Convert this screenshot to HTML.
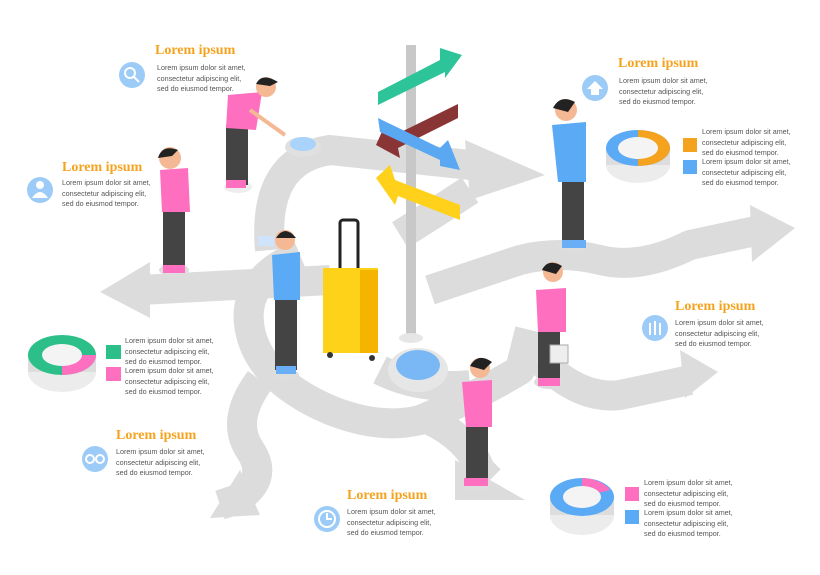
<!DOCTYPE html>
<html><head><meta charset="utf-8"><style>
body{margin:0;width:820px;height:575px;background:#fff;position:relative;overflow:hidden;font-family:"Liberation Sans",sans-serif}
.t{position:absolute;font-family:"Liberation Serif",serif;font-weight:bold;color:#f5a31f;font-size:14px;white-space:nowrap}
.p{position:absolute;font-size:7.2px;line-height:10.5px;color:#555;white-space:nowrap}
svg{position:absolute;left:0;top:0}
</style></head><body>
<svg width="820" height="575" viewBox="0 0 820 575">
<g fill="none" stroke="#dcdcdc" stroke-width="30" stroke-linejoin="round" stroke-linecap="butt">
<path d="M270 250 Q262 160 330 150 L470 165"/>
<path d="M400 235 Q440 210 470 190"/>
<path d="M330 280 L140 290"/>
<path d="M300 255 Q240 280 250 330 Q260 380 330 410 Q380 430 420 420 Q470 400 520 370 L530 330"/>
<path d="M430 290 L520 260 Q560 250 600 260 Q640 270 690 245 L760 230"/>
<path d="M540 360 Q580 400 620 395 L690 380"/>
<path d="M260 380 Q230 420 250 450 Q270 480 235 500 L220 505"/>
<path d="M430 420 Q470 440 480 470 L490 480"/>
<path d="M380 370 Q420 390 470 385"/>
</g>
<g fill="#dcdcdc">
<polygon points="465,140 545,175 470,200"/>
<polygon points="150,262 100,292 150,318"/>
<polygon points="750,205 795,228 752,262"/>
<polygon points="680,350 718,372 685,398"/>
<polygon points="240,470 210,518 260,515"/>
<polygon points="455,460 525,500 455,500"/>
</g>
<!-- signpost -->
<rect x="406" y="45" width="10" height="290" fill="#c8c8c8"/>
<ellipse cx="411" cy="338" rx="12" ry="5" fill="#e6e6e6"/>
<polygon points="378,92 440,60 440,48 462,55 445,78 445,72 378,105" fill="#2dc49a"/>
<polygon points="395,135 458,104 458,118 398,148 400,158 376,145 385,125" fill="#8a3535"/>
<polygon points="378,118 440,148 448,140 460,170 440,166 440,160 380,132" fill="#5aa8f2"/>
<polygon points="395,180 460,205 460,220 398,196 395,205 376,178 390,165" fill="#ffd11a"/>
<!-- suitcase -->
<rect x="340" y="220" width="18" height="60" fill="none" stroke="#222" stroke-width="3" rx="3"/>
<rect x="323" y="268" width="55" height="85" fill="#ffd21a"/>
<rect x="360" y="270" width="18" height="83" fill="#f5b400"/>
<circle cx="330" cy="355" r="3" fill="#333"/><circle cx="372" cy="358" r="3" fill="#333"/>
<!-- magnifier bowls -->
<ellipse cx="418" cy="370" rx="30" ry="22" fill="#e6e6e6"/><ellipse cx="418" cy="365" rx="22" ry="15" fill="#7ab8f5"/>
<ellipse cx="303" cy="147" rx="18" ry="10" fill="#e0e0e0"/><ellipse cx="303" cy="144" rx="13" ry="7" fill="#a9d3fa"/>
<!-- charts -->
<g>
<ellipse cx="638" cy="165" rx="32" ry="18" fill="#ececec"/><rect x="606" y="148" width="64" height="17" fill="#ddd"/>
<ellipse cx="638" cy="148" rx="32" ry="18" fill="#5aaaf5"/><path d="M638 130 A32 18 0 0 1 638 166Z" fill="#f5a31f"/>
<ellipse cx="638" cy="148" rx="20" ry="11" fill="#f4f4f4"/>
</g>
<g>
<ellipse cx="62" cy="372" rx="34" ry="20" fill="#ececec"/><rect x="28" y="355" width="68" height="17" fill="#ddd"/>
<ellipse cx="62" cy="355" rx="34" ry="20" fill="#2dbf8a"/><path d="M62 355 L96 355 A34 20 0 0 1 62 375Z" fill="#ff6fc0"/>
<ellipse cx="62" cy="355" rx="20" ry="11" fill="#f4f4f4"/>
</g>
<g>
<ellipse cx="582" cy="515" rx="32" ry="20" fill="#ececec"/><rect x="550" y="497" width="64" height="18" fill="#ddd"/>
<ellipse cx="582" cy="497" rx="32" ry="19" fill="#5aaaf5"/><path d="M582 478 A32 19 0 0 1 610 490 L582 497Z" fill="#ff6fc0"/>
<ellipse cx="582" cy="497" rx="19" ry="11" fill="#f4f4f4"/>
</g>
<!-- legend squares -->
<rect x="683" y="138" width="14" height="14" fill="#f5a31f"/><rect x="683" y="160" width="14" height="14" fill="#5aaaf5"/>
<rect x="106" y="345" width="15" height="14" fill="#2dbf8a"/><rect x="106" y="367" width="15" height="14" fill="#ff6fc0"/>
<rect x="625" y="487" width="14" height="14" fill="#ff6fc0"/><rect x="625" y="510" width="14" height="14" fill="#5aaaf5"/>
<!-- icons -->
<g fill="#9ccbf8"><circle cx="132" cy="75" r="13"/><circle cx="40" cy="190" r="13"/><circle cx="595" cy="88" r="13"/><circle cx="655" cy="328" r="13"/><circle cx="95" cy="459" r="13"/><circle cx="327" cy="519" r="13"/></g>
<g fill="none" stroke="#fff" stroke-width="2"><circle cx="130" cy="73" r="5"/><line x1="134" y1="77" x2="139" y2="82"/>
<circle cx="90" cy="459" r="4"/><circle cx="100" cy="459" r="4"/><circle cx="327" cy="519" r="8"/><path d="M327 513 V519 H332"/>
<path d="M650 335 V323 M655 335 V321 M660 335 V323"/></g>
<g fill="#fff"><circle cx="40" cy="185" r="4"/><path d="M32 198 Q40 186 48 198Z"/><path d="M587 89 L595 81 L603 89 L599 89 L599 95 L591 95 L591 89Z"/></g>
<!-- people -->
<g>
<ellipse cx="238" cy="187" rx="14" ry="6" fill="#eee"/>
<rect x="226" y="125" width="22" height="60" fill="#444"/><path d="M228 95 L262 92 L256 130 L226 128Z" fill="#ff6fc0"/>
<circle cx="266" cy="87" r="10" fill="#f5b895"/><path d="M256 84 Q262 72 278 82 L270 86Z" fill="#222"/>
<path d="M250 110 L285 135" stroke="#f5b895" stroke-width="4"/><rect x="226" y="180" width="20" height="8" fill="#ff6fc0"/>

<ellipse cx="174" cy="270" rx="15" ry="6" fill="#ddd"/>
<rect x="163" y="210" width="22" height="60" fill="#444"/><path d="M160 170 L188 168 L190 212 L162 212Z" fill="#ff6fc0"/>
<circle cx="170" cy="158" r="11" fill="#f5b895"/><path d="M158 158 Q162 144 178 150 L172 156 Z" fill="#222"/>
<rect x="163" y="265" width="22" height="8" fill="#ff6fc0"/>

<ellipse cx="284" cy="375" rx="15" ry="6" fill="#ddd"/>
<rect x="275" y="298" width="22" height="72" fill="#444"/><path d="M272 255 L300 252 L300 300 L274 300Z" fill="#5aaaf5"/>
<circle cx="285" cy="240" r="10" fill="#f5b895"/><path d="M276 238 Q285 224 296 238Z" fill="#222"/>
<rect x="258" y="236" width="16" height="10" fill="#cfe4fb"/><rect x="276" y="366" width="20" height="8" fill="#6aaef5"/>

<ellipse cx="574" cy="247" rx="17" ry="7" fill="#ddd"/>
<rect x="562" y="180" width="22" height="65" fill="#444"/><path d="M552 125 L586 122 L586 182 L558 182Z" fill="#5aaaf5"/>
<circle cx="566" cy="110" r="11" fill="#f5b895"/><path d="M553 108 Q560 94 575 102 L568 112Z" fill="#222"/>
<rect x="562" y="240" width="24" height="8" fill="#6aaef5"/>

<ellipse cx="550" cy="382" rx="16" ry="7" fill="#ddd"/>
<rect x="538" y="330" width="22" height="50" fill="#444"/><path d="M536 290 L566 288 L566 332 L538 332Z" fill="#ff6fc0"/>
<circle cx="553" cy="272" r="10" fill="#f5b895"/><path d="M542 270 Q548 258 562 266 L556 274Z" fill="#222"/>
<rect x="550" y="345" width="18" height="18" fill="#eee" stroke="#aaa"/><rect x="538" y="378" width="22" height="8" fill="#ff6fc0"/>

<ellipse cx="477" cy="485" rx="16" ry="7" fill="#ddd"/>
<rect x="466" y="425" width="22" height="58" fill="#444"/><path d="M462 382 L492 380 L492 427 L466 427Z" fill="#ff6fc0"/>
<circle cx="480" cy="368" r="10" fill="#f5b895"/><path d="M470 366 Q478 352 492 362 L484 370Z" fill="#222"/>
<rect x="464" y="478" width="24" height="8" fill="#ff6fc0"/>
</g>
</svg>

<div class="t" style="left:155px;top:43px">Lorem ipsum</div>
<div class="p" style="left:157px;top:63px">Lorem ipsum dolor sit amet,<br>consectetur adipiscing elit,<br>sed do eiusmod tempor.</div>
<div class="t" style="left:62px;top:160px">Lorem ipsum</div>
<div class="p" style="left:62px;top:178px">Lorem ipsum dolor sit amet,<br>consectetur adipiscing elit,<br>sed do eiusmod tempor.</div>
<div class="t" style="left:618px;top:56px">Lorem ipsum</div>
<div class="p" style="left:619px;top:76px">Lorem ipsum dolor sit amet,<br>consectetur adipiscing elit,<br>sed do eiusmod tempor.</div>
<div class="p" style="left:702px;top:127px">Lorem ipsum dolor sit amet,<br>consectetur adipiscing elit,<br>sed do eiusmod tempor.</div>
<div class="p" style="left:702px;top:157px">Lorem ipsum dolor sit amet,<br>consectetur adipiscing elit,<br>sed do eiusmod tempor.</div>
<div class="t" style="left:675px;top:299px">Lorem ipsum</div>
<div class="p" style="left:675px;top:318px">Lorem ipsum dolor sit amet,<br>consectetur adipiscing elit,<br>sed do eiusmod tempor.</div>
<div class="p" style="left:125px;top:336px">Lorem ipsum dolor sit amet,<br>consectetur adipiscing elit,<br>sed do eiusmod tempor.</div>
<div class="p" style="left:125px;top:366px">Lorem ipsum dolor sit amet,<br>consectetur adipiscing elit,<br>sed do eiusmod tempor.</div>
<div class="t" style="left:116px;top:428px">Lorem ipsum</div>
<div class="p" style="left:116px;top:447px">Lorem ipsum dolor sit amet,<br>consectetur adipiscing elit,<br>sed do eiusmod tempor.</div>
<div class="t" style="left:347px;top:488px">Lorem ipsum</div>
<div class="p" style="left:347px;top:507px">Lorem ipsum dolor sit amet,<br>consectetur adipiscing elit,<br>sed do eiusmod tempor.</div>
<div class="p" style="left:644px;top:478px">Lorem ipsum dolor sit amet,<br>consectetur adipiscing elit,<br>sed do eiusmod tempor.</div>
<div class="p" style="left:644px;top:508px">Lorem ipsum dolor sit amet,<br>consectetur adipiscing elit,<br>sed do eiusmod tempor.</div>
</body></html>
